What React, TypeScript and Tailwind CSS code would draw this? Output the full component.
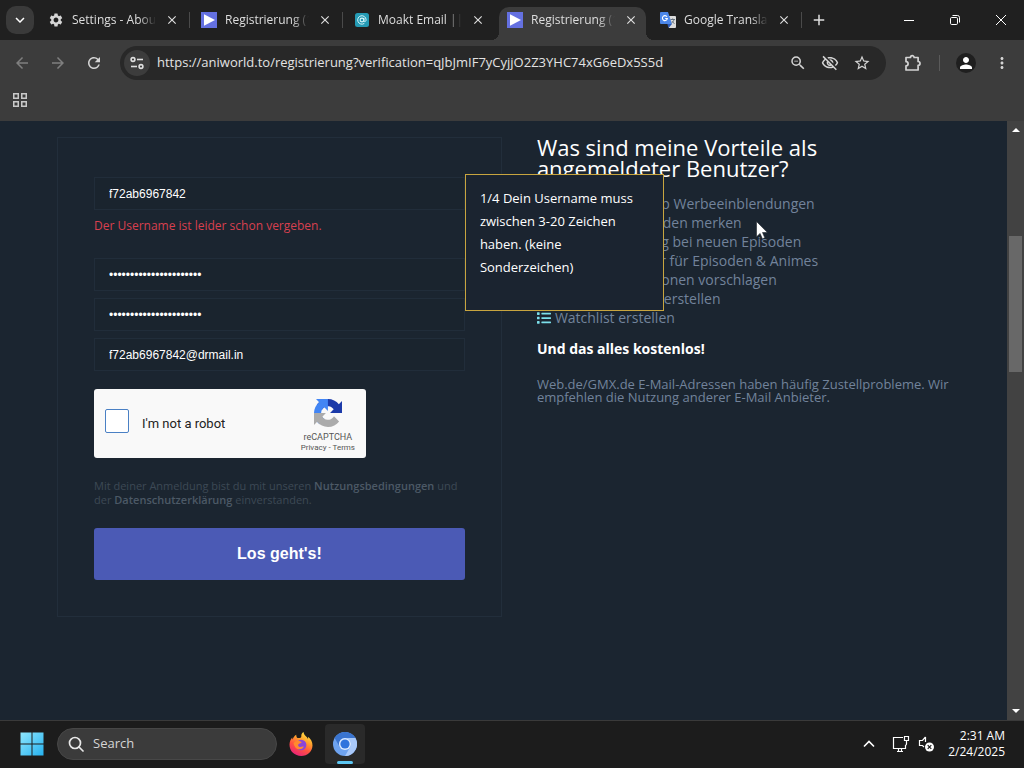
import { useState } from "react";
import type { ReactNode } from "react";
import { FaList } from "react-icons/fa";
import {
  MdArrowBack,
  MdArrowForward,
  MdClose,
  MdMoreVert,
  MdAdd,
  MdOutlineVisibilityOff,
  MdPerson,
  MdRefresh,
  MdSettings,
  MdStarBorder,
  MdZoomOut,
  MdKeyboardArrowDown,
} from "react-icons/md";

const TABS = [
  { title: "Settings - About", icon: <MdSettings className="h-4 w-4 text-[#d6d6d6]" />, divider: true },
  { title: "Registrierung (1)", icon: <PlayIcon />, divider: true },
  { title: "Moakt Email || Te", icon: <MoaktIcon /> },
  { title: "Registrierung (1)", icon: <PlayIcon />, active: true },
  { title: "Google Translate", icon: <TranslateIcon />, divider: true },
];

const BENEFITS = [
  "Kein Layer-Popup Werbeeinblendungen",
  "Geschaute Episoden merken",
  "Benachrichtigung bei neuen Episoden",
  "Eigener Kalender für Episoden & Animes",
  "Serien-Informationen vorschlagen",
  "Anime Wünsche erstellen",
  "Watchlist erstellen",
];

function PlayIcon() {
  return (
    <svg viewBox="0 0 16 16" className="h-4 w-4">
      <rect width="16" height="16" fill="#6470e0" />
      <path d="M3 2.2 14 8 3 13.8z" fill="#fff" />
    </svg>
  );
}

function MoaktIcon() {
  return (
    <svg viewBox="0 0 16 16" className="h-4 w-4" fill="none">
      <rect x="1" y="1" width="14" height="14" rx="2.5" fill="#259bb5" />
      <circle cx="8" cy="8" r="1.9" stroke="#d9f6fb" strokeWidth="1.1" />
      <path d="M9.9 6v2.6c0 1.6 2.2 1.3 2.2-.8A4.2 4.2 0 1 0 10.3 11.4" stroke="#d9f6fb" strokeWidth="1" />
    </svg>
  );
}

function TranslateIcon() {
  return (
    <svg viewBox="0 0 16 16" className="h-4 w-4" fill="none">
      <path d="M6 4h9a1 1 0 0 1 1 1v10a1 1 0 0 1-1 1H9z" fill="#dcdcdc" />
      <path d="M1 0h7l4 12H1a1 1 0 0 1-1-1V1a1 1 0 0 1 1-1z" fill="#4b86e8" />
      <path d="M8.5 16 12 12H7.4z" fill="#2b59b5" />
      <path d="M7 4.7A2.5 2.5 0 1 0 7.4 6.5H5.2" stroke="#fff" strokeWidth="1.1" />
      <path d="M10.5 7.5h4.5M12.7 6.5v1M14 7.5c-.4 1.8-1.6 3-2.5 3.6M12 9.2l2.4 2.6" stroke="#66727f" />
    </svg>
  );
}

function TuneIcon() {
  return (
    <svg viewBox="0 0 16 16" className="h-4 w-4" fill="none" stroke="#dedede" strokeWidth="1.6">
      <circle cx="4" cy="4.5" r="1.9" />
      <path d="M8 4.5h6" />
      <circle cx="12" cy="11.5" r="1.9" />
      <path d="M2 11.5h6" />
    </svg>
  );
}

function BookmarkGrid() {
  return (
    <svg viewBox="0 0 16 16" className="h-4 w-4" fill="none" stroke="#c9c9c9" strokeWidth="1.5">
      <rect x="1.75" y="1.75" width="4.5" height="4.5" />
      <rect x="9.75" y="1.75" width="4.5" height="4.5" />
      <rect x="1.75" y="9.75" width="4.5" height="4.5" />
      <rect x="9.75" y="9.75" width="4.5" height="4.5" />
    </svg>
  );
}

function ExtensionIcon() {
  return (
    <svg viewBox="0 0 18 18" className="h-[18px] w-[18px]" fill="none" stroke="currentColor" strokeWidth="1.7">
      <path
        strokeLinejoin="round"
        d="M2 3.5h4.5a1.8 1.8 0 0 1 3.6 0h4V7.5a1.9 1.9 0 0 1 0 3.8v4.7H2v-4.2a2 2 0 0 0 0-4.2z"
      />
    </svg>
  );
}

function RecaptchaLogo() {
  return (
    <svg viewBox="0 0 64 64" className="h-7 w-7">
      <path
        fill="#1c3aa9"
        d="M64 31.955l-.033-1.37V4.687l-7.16 7.16C50.948 4.674 42.033.093 32.05.093c-10.4 0-19.622 4.96-25.458 12.64l11.736 11.86a15.55 15.55 0 0 1 4.754-5.334c2.05-1.6 4.952-2.906 8.968-2.906.485 0 .86.057 1.135.163 4.976.393 9.288 3.14 11.828 7.124l-8.307 8.307L64 31.953"
      />
      <path
        fill="#4285f4"
        d="M31.862.094l-1.37.033H4.594l7.16 7.16C4.58 13.147 0 22.06 0 32.046c0 10.4 4.96 19.622 12.64 25.458L24.5 45.768a15.55 15.55 0 0 1-5.334-4.754c-1.6-2.05-2.906-4.952-2.906-8.968 0-.485.057-.86.163-1.135.393-4.976 3.14-9.288 7.124-11.828l8.307 8.307L31.86.095"
      />
      <path
        fill="#ababab"
        d="M.001 32.045l.033 1.37v25.898l7.16-7.16c5.86 7.173 14.774 11.754 24.76 11.754 10.4 0 19.622-4.96 25.458-12.64l-11.736-11.86a15.55 15.55 0 0 1-4.754 5.334c-2.05 1.6-4.952 2.906-8.968 2.906-.485 0-.86-.057-1.135-.163-4.976-.393-9.288-3.14-11.828-7.124l8.307-8.307c-10.522.04-22.4.066-27.295-.005"
      />
    </svg>
  );
}

function WindowsLogo() {
  return (
    <svg viewBox="0 0 24 24" className="h-6 w-6">
      <defs>
        <linearGradient id="win" x1="0" y1="0" x2="1" y2="1">
          <stop offset="0" stopColor="#8fe6fc" />
          <stop offset="1" stopColor="#26b2f0" />
        </linearGradient>
      </defs>
      <path fill="url(#win)" d="M.5.5h11v11H.5zM12.5.5h11v11h-11zM.5 12.5h11v11H.5zM12.5 12.5h11v11h-11z" />
    </svg>
  );
}

function FirefoxLogo() {
  return (
    <svg viewBox="0 0 24 24" className="h-6 w-6">
      <defs>
        <linearGradient id="fox" x1="0.8" y1="0" x2="0.3" y2="1">
          <stop offset="0" stopColor="#fff04a" />
          <stop offset="0.35" stopColor="#ffa22c" />
          <stop offset="0.65" stopColor="#ff5240" />
          <stop offset="1" stopColor="#e8207c" />
        </linearGradient>
      </defs>
      <path
        fill="url(#fox)"
        d="M14.5 0c.4 2.5 1.7 3.6 3.2 5 .6.6 1 1.2 1.3 1.9.2-.8.1-1.5-.1-2.2 3 1.9 4.7 5.4 4.6 8.8C23.3 19.4 18.5 24 12.3 24 5.7 24 .5 19.3.5 12.8c0-2.9 1-5.4 2.7-7.3 0 .8.2 1.5.5 2C4.2 5.4 5.6 3.6 7.3 2.7c-.2 1.4.3 2.5 1.2 3.3h2.2c1.5 0 1.7-1.2 1.6-2.2-.1-1.5.7-3 2.2-3.8z"
      />
      <circle cx="12.2" cy="13" r="5.2" fill="#8a45d8" />
      <path
        fill="#ff8a2e"
        d="M4.5 11.5c1.5-2.3 3.7-3.2 6-2.5l2.2 1c-.2 1.2-1.9 1.4-2.9 1.9-.9.5-1 1.7 0 2.5 1.6 1.3 3.3-.3 5 .4-1.6 3.2-6.2 3.3-8.4.6-.9-1.1-1.5-2.5-1.9-3.9z"
      />
    </svg>
  );
}

function ChromiumLogo() {
  return (
    <svg viewBox="0 0 24 24" className="h-6 w-6">
      <circle cx="12" cy="12" r="12" fill="#6ea3f0" />
      <path fill="#3a74cf" d="M1.6 6A12 12 0 0 1 22.4 6H12a6 6 0 0 0-5.2 9z" />
      <path fill="#a9c9fa" d="M22.4 6A12 12 0 0 1 12 24l5.2-9A6 6 0 0 0 12 6z" />
      <circle cx="12" cy="12" r="6" fill="#dbe9ff" />
      <circle cx="12" cy="12" r="4.6" fill="#2f73dd" />
    </svg>
  );
}

function MousePointer() {
  return (
    <svg viewBox="0 0 12 19" className="pointer-events-none absolute top-[84px] left-[219px] h-[19px] w-3">
      <path d="M.5.5v15.3l3.6-3.4 2.3 5.4 2.4-1-2.3-5.3h4.9z" fill="#fff" stroke="#20262e" strokeWidth="0.6" />
    </svg>
  );
}

type TabProps = { title: string; icon: ReactNode; active?: boolean; divider?: boolean };

function Tab({ title, icon, active, divider }: TabProps) {
  return (
    <div className="relative flex h-full w-[153px] items-end">
      <div
        className={[
          "mx-[3px] flex h-[33px] min-w-0 flex-1 items-center rounded-t-[10px] pr-2 pb-[7px] pl-2",
          active ? "bg-[#3c3c3c]" : "",
        ].join(" ")}
      >
        <span className="shrink-0">{icon}</span>
        <span className="ml-2 w-[84px] shrink-0 overflow-hidden text-xs whitespace-nowrap text-[#dedede] [mask-image:linear-gradient(to_right,black_80%,transparent)]">
          {title}
        </span>
        <button aria-label="Close tab" className="ml-auto text-[#dedede]">
          <MdClose className="h-[14px] w-[14px]" />
        </button>
      </div>
      {active && (
        <>
          <span className="absolute bottom-0 -left-[5px] h-2 w-2 bg-[radial-gradient(circle_at_0_0,transparent_8px,#3c3c3c_8px)]" />
          <span className="absolute -right-[5px] bottom-0 h-2 w-2 bg-[radial-gradient(circle_at_100%_0,transparent_8px,#3c3c3c_8px)]" />
        </>
      )}
      {divider && <span className="absolute top-3 right-0 h-4 w-px bg-[#4a4a4a]" />}
    </div>
  );
}

function TabStrip() {
  return (
    <div className="flex h-10 shrink-0 items-stretch bg-[#202020]">
      <div className="flex w-[37px] shrink-0 items-center justify-end pr-[3px]">
        <button aria-label="Search tabs" className="flex h-7 w-7 items-center justify-center rounded-[10px] bg-[#3a3a3a] text-white">
          <MdKeyboardArrowDown className="h-[18px] w-[18px]" />
        </button>
      </div>
      {TABS.map((tab, i) => (
        <Tab key={i} {...tab} />
      ))}
      <button aria-label="New tab" className="px-2 text-[#dedede]">
        <MdAdd className="h-[18px] w-[18px]" />
      </button>
      <div className="ml-auto flex items-center text-white">
        <button aria-label="Minimize" className="flex w-[46px] justify-center">
          <svg viewBox="0 0 10 10" className="h-[10px] w-[10px]" stroke="currentColor">
            <path d="M0 5.5h10" />
          </svg>
        </button>
        <button aria-label="Restore" className="flex w-[46px] justify-center">
          <svg viewBox="0 0 10 10" className="h-[10px] w-[10px]" fill="none" stroke="currentColor">
            <rect x="0.5" y="2.5" width="7" height="7" rx="1.2" />
            <path d="M2.5.5H7.5a2 2 0 0 1 2 2V7.5" />
          </svg>
        </button>
        <button aria-label="Close" className="flex w-[46px] justify-center">
          <svg viewBox="0 0 10 10" className="h-[10px] w-[10px]" stroke="currentColor">
            <path d="M0 0l10 10M10 0L0 10" />
          </svg>
        </button>
      </div>
    </div>
  );
}

function Toolbar() {
  return (
    <div className="flex h-[46px] shrink-0 items-center bg-[#3c3c3c] px-[13px] text-[#d4d4d4]">
      <button aria-label="Back" className="text-[#7f7f7f]">
        <MdArrowBack className="h-[18px] w-[18px]" />
      </button>
      <button aria-label="Forward" className="ml-[18px] text-[#7f7f7f]">
        <MdArrowForward className="h-[18px] w-[18px]" />
      </button>
      <button aria-label="Reload" className="ml-[18px]">
        <MdRefresh className="h-[18px] w-[18px]" />
      </button>
      <div className="ml-[17px] flex h-[34px] flex-1 items-center rounded-full bg-[#282828] pr-[15px] pl-1">
        <button aria-label="Site information" className="flex h-[26px] w-[26px] shrink-0 items-center justify-center rounded-full bg-[#3c3c3c]">
          <TuneIcon />
        </button>
        <input
          aria-label="Address"
          className="ml-[7px] min-w-0 flex-1 bg-transparent text-[13px] text-[#e3e3e3] outline-none"
          defaultValue="https://aniworld.to/registrierung?verification=qJbJmIF7yCyjjO2Z3YHC74xG6eDx5S5d"
        />
        <div className="flex items-center gap-[14px]">
          <button aria-label="Zoom">
            <MdZoomOut className="h-[18px] w-[18px]" />
          </button>
          <button aria-label="Tracking protection">
            <MdOutlineVisibilityOff className="h-[18px] w-[18px]" />
          </button>
          <button aria-label="Bookmark this page">
            <MdStarBorder className="h-[18px] w-[18px]" />
          </button>
        </div>
      </div>
      <button aria-label="Extensions" className="ml-[18px]">
        <ExtensionIcon />
      </button>
      <span className="ml-[17px] h-4 w-px bg-[#5a5a5a]" />
      <button aria-label="Profile" className="ml-4 flex h-5 w-5 items-center justify-center rounded-full bg-[#1f1f1f] text-white">
        <MdPerson className="h-[18px] w-[18px]" />
      </button>
      <button aria-label="Menu" className="ml-[17px]">
        <MdMoreVert className="h-[18px] w-[18px]" />
      </button>
    </div>
  );
}

function Field({ label, type = "text", value }: { label: string; type?: string; value: string }) {
  return (
    <input
      aria-label={label}
      type={type}
      defaultValue={value}
      className="block h-[33px] w-full border border-[#212d3a] bg-[#1a242e] px-[14px] font-['Liberation_Sans',sans-serif] text-xs text-white outline-none"
    />
  );
}

function Recaptcha() {
  const [checked, setChecked] = useState(false);
  return (
    <div className="mt-[18px] flex h-[69px] w-[272px] items-center rounded-[3px] bg-[#f9f9f9] px-[11px] font-[Roboto,sans-serif]">
      <input
        id="robot"
        type="checkbox"
        checked={checked}
        onChange={() => setChecked(!checked)}
        className="mb-[5px] h-6 w-6 appearance-none rounded-[2px] border border-[#4a80c4] bg-white checked:bg-[#4a80c4]"
      />
      <label htmlFor="robot" className="ml-[13px] text-[13px] text-[#222]">
        I'm not a robot
      </label>
      <div className="ml-auto flex flex-col items-center pt-1 text-[#555]">
        <RecaptchaLogo />
        <span className="mt-1 text-[9px] leading-3">reCAPTCHA</span>
        <span className="text-[8px] leading-[10px]">
          <a href="#privacy">Privacy</a> - <a href="#terms">Terms</a>
        </span>
      </div>
    </div>
  );
}

function RegisterForm() {
  return (
    <form
      className="self-start border border-[#222e3b] px-9 pt-[39px] pb-9"
      onSubmit={(e) => e.preventDefault()}
    >
      <div className="relative">
        <Field label="Username" value="f72ab6967842" />
        {/* Hint bubble next to the focused field */}
        <div
          role="tooltip"
          className="absolute -top-[3px] left-full z-10 h-[137px] w-[199px] border border-[#c8a53f] bg-[#1b2430] px-[14px] py-3 text-[13px] leading-[23px] text-white"
        >
          1/4 Dein Username muss zwischen 3-20 Zeichen haben. (keine Sonderzeichen)
        </div>
      </div>
      <p className="mt-2 text-xs leading-4 text-[#d8404f]">Der Username ist leider schon vergeben.</p>
      <div className="mt-6 flex flex-col gap-[7px]">
        <Field label="Passwort" type="password" value="aaaaaaaaaaaaaaaaaaaaaa" />
        <Field label="Passwort wiederholen" type="password" value="aaaaaaaaaaaaaaaaaaaaaa" />
        <Field label="E-Mail" value="f72ab6967842@drmail.in" />
      </div>
      <Recaptcha />
      <p className="mt-[21px] text-[11px] leading-[14px] text-[#3d4955]">
        Mit deiner Anmeldung bist du mit unseren{" "}
        <a href="#terms" className="font-semibold text-[#4c5966]">Nutzungsbedingungen</a> und der{" "}
        <a href="#privacy" className="font-semibold text-[#4c5966]">Datenschutzerklärung</a> einverstanden.
      </p>
      <button className="mt-[21px] h-[52px] w-full rounded-[3px] bg-[#4b5ab5] font-['Liberation_Sans',sans-serif] text-base font-bold text-white">
        Los geht's!
      </button>
    </form>
  );
}

function Benefits() {
  return (
    <section className="relative">
      <h2 className="text-[22px] leading-[21px] text-white">Was sind meine Vorteile als angemeldeter Benutzer?</h2>
      <ul className="mt-[15px] text-sm leading-[19px] text-[#72839b]">
        {BENEFITS.map((text) => (
          <li key={text} className="flex items-center gap-1">
            <FaList className="h-[14px] w-[14px] text-[#7ce0ea]" />
            <span className="whitespace-nowrap">{text}</span>
          </li>
        ))}
      </ul>
      <p className="mt-3 text-sm leading-[19px] font-bold text-white">Und das alles kostenlos!</p>
      <p className="mt-5 text-[13px] leading-[13px] text-[#72839b]">
        Web.de/GMX.de E-Mail-Adressen haben häufig Zustellprobleme. Wir empfehlen die Nutzung anderer E-Mail Anbieter.
      </p>
      <MousePointer />
    </section>
  );
}

function Scrollbar() {
  return (
    <div className="flex w-[17px] shrink-0 flex-col items-center justify-between bg-[#424242] py-[7px]">
      <span className="h-0 w-0 border-x-4 border-b-4 border-x-transparent border-b-white" />
      <div className="flex w-full flex-1 flex-col items-center pt-[104px]">
        <span className="h-[136px] w-[13px] bg-[#686868]" />
      </div>
      <span className="h-0 w-0 border-x-4 border-t-4 border-x-transparent border-t-white" />
    </div>
  );
}

function Taskbar() {
  return (
    <footer className="flex h-12 shrink-0 items-center border-t border-[#3a3a3a] bg-[#1c1c1c] pr-[19px] pb-px pl-5 text-white">
      <button aria-label="Start">
        <WindowsLogo />
      </button>
      <label className="ml-[13px] flex h-8 w-[220px] items-center rounded-full border border-[#474747] bg-[#3b3b3b] pl-[10px]">
        <svg viewBox="0 0 16 16" className="h-4 w-4 shrink-0" fill="none" stroke="#e8e8e8" strokeWidth="1.7">
          <circle cx="7" cy="7" r="5.5" />
          <path d="M11 11l4 4" strokeLinecap="round" />
        </svg>
        <input aria-label="Search" placeholder="Search" className="ml-[9px] min-w-0 flex-1 bg-transparent text-[13px] outline-none placeholder:text-[#d5d5d5]" />
      </label>
      <button aria-label="Firefox" className="ml-3">
        <FirefoxLogo />
      </button>
      <button aria-label="Chromium" className="relative ml-3 flex h-10 w-10 items-center justify-center rounded bg-[#2a2a2a]">
        <ChromiumLogo />
        <span className="absolute bottom-0 h-[3px] w-4 rounded-full bg-[#5cc6f2]" />
      </button>
      <div className="ml-auto flex items-center">
        <svg viewBox="0 0 12 12" className="h-3 w-3" fill="none" stroke="currentColor" strokeWidth="1.6">
          <path d="M1 8.5l5-5 5 5" />
        </svg>
        <svg viewBox="0 0 18 18" className="ml-[17px] h-[18px] w-[18px]" fill="none" stroke="currentColor" strokeWidth="1.2">
          <path d="M11 2.5H1.5v11h12V10M5 16.5h6M6.5 13.5v3M9.5 13.5v3M12.5 1.5h4v4h-4zM14.5 5.5V9q0 1-1 1" />
        </svg>
        <svg viewBox="0 0 18 18" className="ml-2 h-[18px] w-[18px]" fill="none" stroke="currentColor" strokeWidth="1.2">
          <path d="M7.5 2 4.5 5.5H1.5v5h3l1.5 1.5M7.5 2v5" />
          <circle cx="11.5" cy="12" r="4.5" fill="#fff" stroke="none" />
          <path d="M9.7 10.2l3.6 3.6M13.3 10.2l-3.6 3.6" stroke="#1c1c1c" />
        </svg>
        <div className="ml-3 text-right text-xs leading-4">
          <div>2:31 AM</div>
          <div>2/24/2025</div>
        </div>
      </div>
    </footer>
  );
}

export default function App() {
  return (
    <div className="flex h-screen flex-col overflow-hidden bg-[#1b2530] font-['Open_Sans',sans-serif]">
      <TabStrip />
      <Toolbar />
      <div className="flex h-[35px] shrink-0 items-center bg-[#3c3c3c] pb-2 pl-3">
        <button aria-label="Apps">
          <BookmarkGrid />
        </button>
      </div>
      <div className="flex min-h-0 flex-1">
        <main className="grid flex-1 grid-cols-[14fr_13fr] content-start gap-[35px] overflow-hidden px-[57px] pt-4">
          <RegisterForm />
          <Benefits />
        </main>
        <Scrollbar />
      </div>
      <Taskbar />
    </div>
  );
}
